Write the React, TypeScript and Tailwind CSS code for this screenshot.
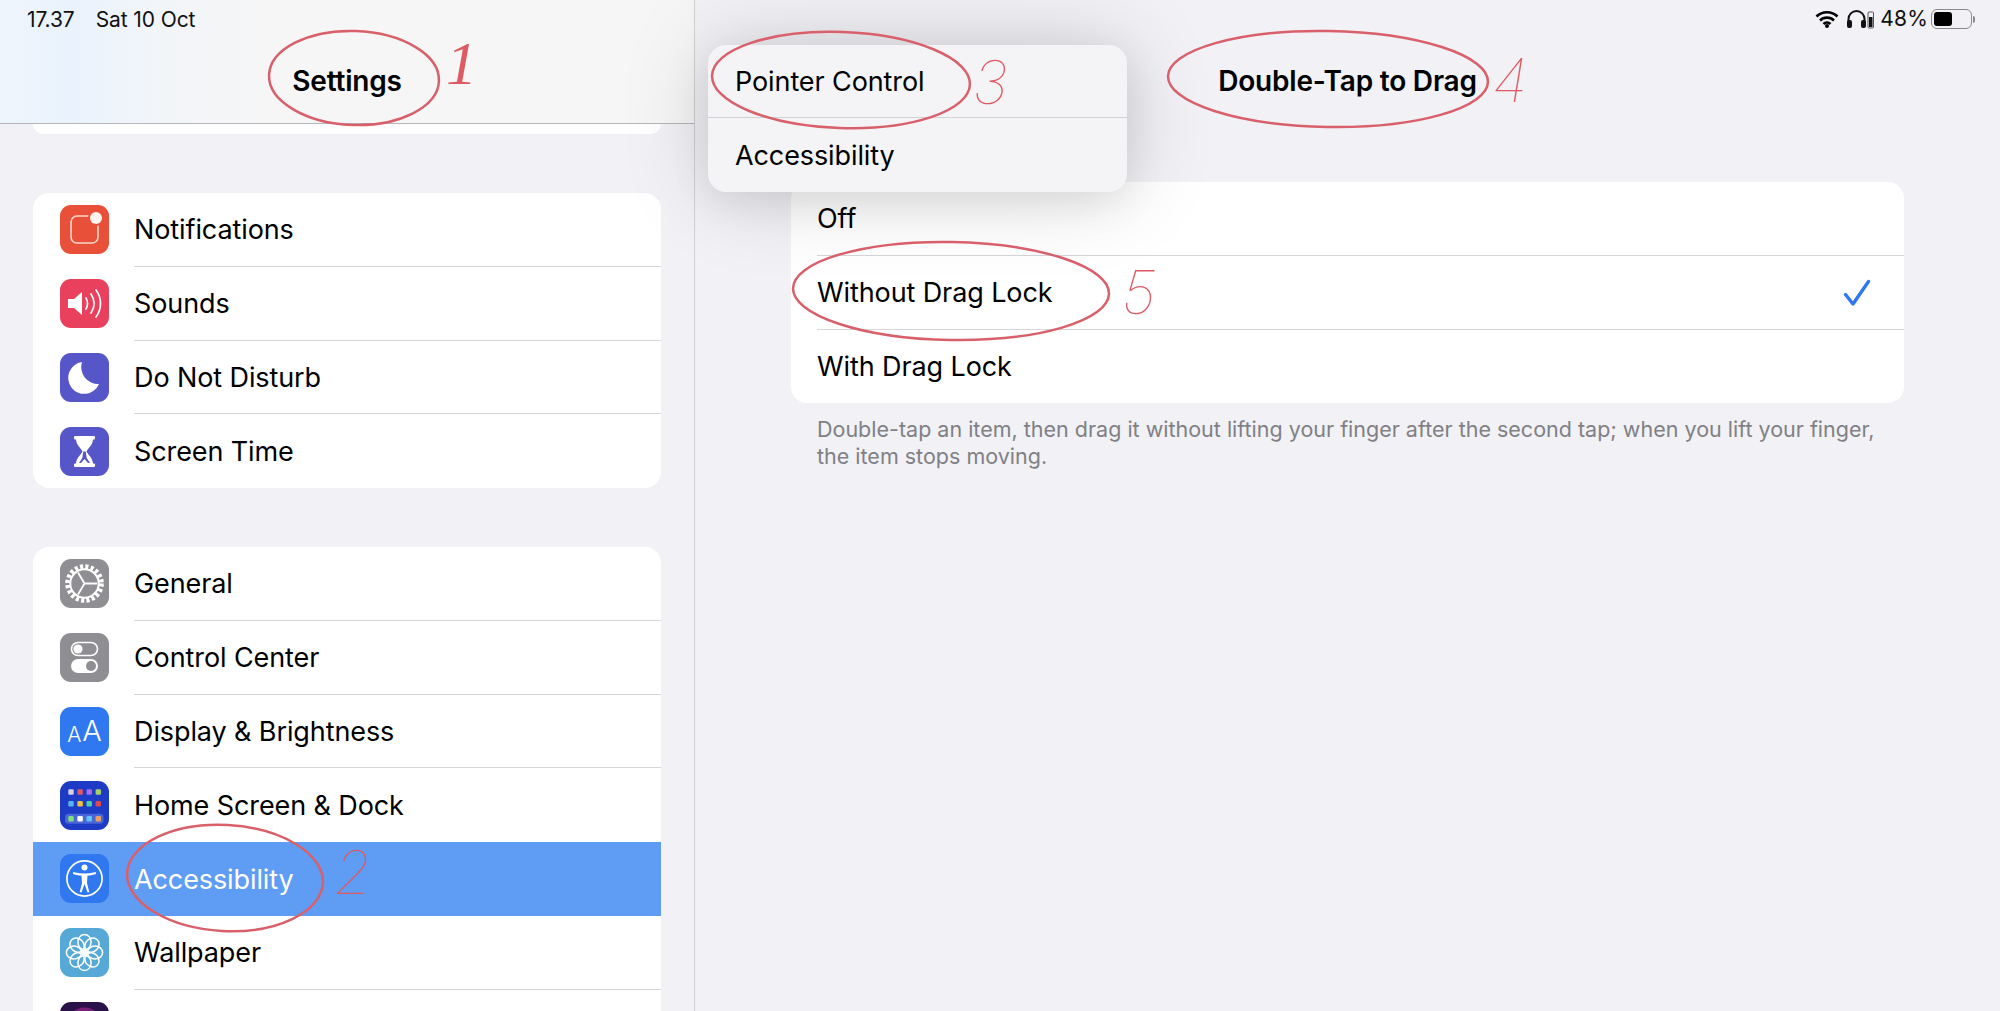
import React from "react";

const font = { fontFamily: 'Inter, "Liberation Sans", sans-serif' };

function Tile({ bg, children }: { bg: string; children: React.ReactNode }) {
  return (
    <div className={`h-[49px] w-[49px] shrink-0 overflow-hidden rounded-[11px] ${bg}`}>
      <svg viewBox="0 0 49 49" className="h-full w-full" fill="none">
        {children}
      </svg>
    </div>
  );
}

const NotificationsIcon = () => (
  <Tile bg="bg-[#e9503a]">
    <rect x="11" y="11" width="27" height="27" rx="6" stroke="#f8d6cc" strokeWidth="1.6" />
    <circle cx="36" cy="13" r="8" fill="#e9503a" />
    <circle cx="36" cy="13" r="6" fill="#fdf3ef" />
  </Tile>
);
const SoundsIcon = () => (
  <Tile bg="bg-[#e9405e]">
    <path d="M8 20h6l8-7v23l-8-7H8z" fill="#fff" />
    <path d="M26 19c2 3 2 8 0 11M31 15c4 6 4 13 0 19M36 11c6 8 6 19 0 27" stroke="#fff" strokeWidth="1.7" strokeLinecap="round" />
  </Tile>
);
const MoonIcon = () => (
  <Tile bg="bg-[#5656c8]">
    <path d="M22 9a16 16 0 1 0 17 22A17 17 0 0 1 22 9z" fill="#fff" />
  </Tile>
);
const HourglassIcon = () => (
  <Tile bg="bg-[#5656c8]">
    <rect x="14" y="9" width="21" height="3.5" rx="1" fill="#fff" />
    <rect x="14" y="36.5" width="21" height="3.5" rx="1" fill="#fff" />
    <path d="M16 12h17c0 6-5 9-6.5 12.5C28 28 33 31 33 37H16c0-6 5-9 6.5-12.5C21 21 16 18 16 12z" fill="#fff" />
    <path d="M23.3 24.5h2.4l1 6.5 3.3 5h-11l3.3-5z" fill="#5656c8" />
    <path d="M21 36l3.5-4 3.5 4z" fill="#fff" />
  </Tile>
);
const GearIcon = () => (
  <Tile bg="bg-[#8e8e93]">
    <circle cx="24.5" cy="24.5" r="16.8" stroke="#fff" strokeWidth="5" strokeDasharray="3.1 2.2" />
    <circle cx="24.5" cy="24.5" r="14.2" stroke="#fff" strokeWidth="2" />
    <path d="M24.5 24.5V12M24.5 24.5l11 6.5M24.5 24.5l-11 6.5" stroke="#fff" strokeWidth="1.8" transform="rotate(90 24.5 24.5)" />
  </Tile>
);
const ControlIcon = () => (
  <Tile bg="bg-[#8e8e93]">
    <rect x="11.5" y="9.5" width="26" height="13" rx="6.5" stroke="#fff" strokeWidth="1.6" />
    <circle cx="18" cy="16" r="4.6" fill="#fff" />
    <rect x="11" y="26" width="27" height="14" rx="7" fill="#fff" />
    <circle cx="31" cy="33" r="5" fill="#8e8e93" />
  </Tile>
);
const DisplayIcon = () => (
  <div className="flex h-[49px] w-[49px] shrink-0 items-end justify-center rounded-[11px] bg-[#2f78ef] pb-[11px] font-light leading-none text-white" style={font}>
    <span className="text-[21px] leading-none">A</span>
    <span className="ml-[1px] text-[29px] leading-none">A</span>
  </div>
);
const HomeIcon = () => {
  const top = ["#d5d0e8", "#e2566b", "#a56ef0", "#a8d06a"];
  const mid = ["#56b4f0", "#f0c040", "#50d0a8", "#e0484f"];
  const dock = ["#7ee07a", "#ffffff", "#5cc6f5", "#e8a060"];
  return (
    <Tile bg="bg-[#1d3bc4]">
      {top.map((c, i) => <rect key={c} x={8.3 + i * 9.1} y="8.3" width="5.4" height="5.4" rx="1.2" fill={c} />)}
      {mid.map((c, i) => <rect key={c} x={8.3 + i * 9.1} y="20" width="5.4" height="5.4" rx="1.2" fill={c} />)}
      <rect x="5" y="32.7" width="38.5" height="10" rx="3.5" fill="#4a66d8" />
      {dock.map((c, i) => <rect key={c} x={8.3 + i * 9.1} y="35" width="5.4" height="5.4" rx="1.2" fill={c} />)}
    </Tile>
  );
};
const AccessIcon = () => (
  <Tile bg="bg-[#2f78ef]">
    <circle cx="24.5" cy="24.5" r="17.6" stroke="#fff" strokeWidth="1.7" />
    <circle cx="24.5" cy="13.5" r="3" fill="#fff" />
    <path d="M14 19.2c3.500 1 7 1.500 10.500 1.500S31.500 20.200 35 19.200" stroke="#fff" strokeWidth="2.200" strokeLinecap="round" />
    <path d="M21.500 21h6l-.5 8 2.300 9.200h-1.800L24.500 30l-3 8.200h-1.800L22 29z" fill="#fff" />
  </Tile>
);
const WallpaperIcon = () => (
  <Tile bg="bg-[#56a9d6]">
    {[0, 45, 90, 135, 180, 225, 270, 315].map((a) => (
      <ellipse key={a} cx="24.5" cy="14" rx="6.600" ry="7.600" stroke="#fff" strokeWidth="1.500" transform={`rotate(${a} 24.500 24.500)`} />
    ))}
    <circle cx="24.500" cy="24.500" r="4" fill="#fff" />
  </Tile>
);
const SiriIcon = () => (
  <Tile bg="bg-[#2a1248]">
    <circle cx="24.500" cy="24.500" r="19" fill="#7a1f78" />
    <circle cx="24.500" cy="24.500" r="15" fill="#c23aa8" />
  </Tile>
);

function Row({ icon, label, active, last }: { icon: React.ReactNode; label?: string; active?: boolean; last?: boolean }) {
  return (
    <div className={`flex h-[73.75px] items-center pl-[27px] ${active ? "bg-[#5f9cf4]" : ""}`}>
      {icon}
      <div className={`ml-[25px] flex h-full flex-1 items-center pt-[2px] text-[27px] tracking-[-0.1px] ${active ? "text-white" : "text-black"} ${last || active ? "" : "border-b border-[#d6d6da]"}`}>
        {label}
      </div>
    </div>
  );
}

function Option({ label, checked, last }: { label: string; checked?: boolean; last?: boolean }) {
  return (
    <div className={`flex h-[73.75px] items-center justify-between pr-[33px] pt-[2px] text-[27px] tracking-[-0.1px] text-black ${last ? "" : "border-b border-[#d6d6da]"}`}>
      {label}
      {checked && (
        <svg width="28" height="28" viewBox="0 0 28 28" fill="none">
          <path d="M2.500 15.500l7.500 9.500L25.500 2.500" stroke="#2f78ef" strokeWidth="3.400" strokeLinecap="round" strokeLinejoin="round" />
        </svg>
      )}
    </div>
  );
}

function Digit({ children, className }: { children: string; className: string }) {
  return (
    <span className={`absolute text-[60px] font-thin italic leading-none text-[#de5a62] ${className}`} style={font}>
      {children}
    </span>
  );
}

export default function App() {
  return (
    <div className="relative flex h-[1011px] w-[2000px] overflow-hidden bg-[#f1f1f6]" style={font}>
      <aside className="h-full w-[695px] shrink-0 border-r border-[#cfcfd4]">
        <header className="flex h-[124px] flex-col border-b border-[#b5b5ba] bg-[linear-gradient(90deg,#eff5fc_0%,#e9f2fd_10%,#f2f5f9_22%,#f6f6f6_40%,#f6f6f6_100%)] px-[27px]">
          <div className="flex h-[38px] items-center gap-[21px] pt-[1px] text-[21px] tracking-[-0.1px] text-[#111]">
            <span>17.37</span>
            <span>Sat 10 Oct</span>
          </div>
          <div className="-ml-[27px] flex w-[694px] flex-1 items-start justify-center pt-[22px] text-[28px] font-semibold tracking-[-0.2px] text-black">
            Settings
          </div>
        </header>
        <div className="mx-[33px] h-[10px] rounded-b-[16px] bg-white" />
        <section className="mx-[33px] mt-[59px] overflow-hidden rounded-[16px] bg-white">
          <Row icon={<NotificationsIcon />} label="Notifications" />
          <Row icon={<SoundsIcon />} label="Sounds" />
          <Row icon={<MoonIcon />} label="Do Not Disturb" />
          <Row icon={<HourglassIcon />} label="Screen Time" last />
        </section>
        <section className="mx-[33px] mt-[59px] rounded-t-[16px] bg-white">
          <Row icon={<GearIcon />} label="General" />
          <Row icon={<ControlIcon />} label="Control Center" />
          <Row icon={<DisplayIcon />} label="Display & Brightness" />
          <Row icon={<HomeIcon />} label="Home Screen & Dock" last />
          <Row icon={<AccessIcon />} label="Accessibility" active />
          <Row icon={<WallpaperIcon />} label="Wallpaper" />
          <Row icon={<SiriIcon />} />
        </section>
      </aside>

      <main className="flex-1">
        <div className="flex h-[38px] items-center justify-end pr-[25px] text-[21px] text-[#111]">
          <svg width="24" height="18" viewBox="0 0 24 18" fill="none">
            <path d="M1.500 6.500a15 15 0 0 1 21 0M5 10.500a10 10 0 0 1 14 0M8.500 14a5 5 0 0 1 7 0" stroke="#000" strokeWidth="2.600" />
            <circle cx="12" cy="16" r="2" fill="#000" />
          </svg>
          <svg className="ml-[7px] mr-[6px]" width="28" height="20" viewBox="0 0 28 20" fill="none">
            <path d="M2.500 13V10a8 8 0 0 1 16 0v3" stroke="#111" strokeWidth="2" />
            <rect x="1" y="11" width="5" height="8" rx="2" fill="#111" />
            <rect x="15" y="11" width="5" height="8" rx="2" fill="#111" />
            <rect x="22" y="3" width="5.500" height="16" rx="1" stroke="#555" strokeWidth="1" />
            <rect x="23" y="8" width="3.500" height="10" fill="#111" />
          </svg>
          <span className="mr-[3px] tracking-[0.2px]">48%</span>
          <div className="flex items-center">
            <div className="flex h-[20px] w-[41px] items-stretch rounded-[6px] border border-[#8a8a8e] p-[2px]">
              <div className="w-[18px] rounded-[3px] bg-black" />
            </div>
            <div className="ml-[1px] h-[7px] w-[2px] rounded-r-full bg-[#8a8a8e]" />
          </div>
        </div>
        <div className="flex h-[86px] items-start justify-center pt-[22px] text-[28px] font-semibold tracking-[-0.2px] text-black">
          Double-Tap to Drag
        </div>
        <section className="ml-[96px] mt-[58px] w-[1113px] rounded-[16px] bg-white pl-[26px]">
          <Option label="Off" />
          <Option label="Without Drag Lock" checked />
          <Option label="With Drag Lock" last />
        </section>
        <p className="ml-[122px] mt-[13px] w-[1070px] text-[21.500px] leading-[27px] text-[#808085]">
          Double-tap an item, then drag it without lifting your finger after the second tap; when you lift your finger, the item stops moving.
        </p>
      </main>

      <div className="absolute left-[708px] top-[45px] w-[419px] rounded-[18px] bg-[#f4f4f7] pl-[27px] text-[27px] tracking-[-0.1px] text-black shadow-[0_0_90px_rgba(0,0,0,0.16),0_10px_40px_rgba(0,0,0,0.08)]">
        <div className="-ml-[27px] flex h-[73px] items-center border-b border-[#d2d2d6] pl-[27px] pt-[2px]">Pointer Control</div>
        <div className="flex h-[74px] items-center pt-[2px]">Accessibility</div>
      </div>

      <svg className="pointer-events-none absolute left-0 top-0" width="2000" height="1011" fill="none" stroke="#d9606a" strokeWidth="2.500">
        <ellipse cx="354" cy="78" rx="85" ry="47" transform="rotate(2 354 78)" />
        <ellipse cx="225" cy="878" rx="98" ry="53" transform="rotate(3 225 878)" />
        <ellipse cx="841" cy="80" rx="129" ry="48" transform="rotate(2 841 80)" />
        <ellipse cx="1328" cy="79" rx="160" ry="48" transform="rotate(1 1328 79)" />
        <ellipse cx="951" cy="291" rx="158" ry="49" transform="rotate(1 951 291)" />
      </svg>
      <span className="absolute left-[446px] top-[32px] text-[62px] italic leading-none text-[#de5a62]" style={{ fontFamily: '"Liberation Serif", serif' }}>1</span>
      <Digit className="left-[334px] top-[842px]">2</Digit>
      <Digit className="left-[972px] top-[52px]">3</Digit>
      <Digit className="left-[1492px] top-[50px]">4</Digit>
      <Digit className="left-[1122px] top-[262px]">5</Digit>
    </div>
  );
}
